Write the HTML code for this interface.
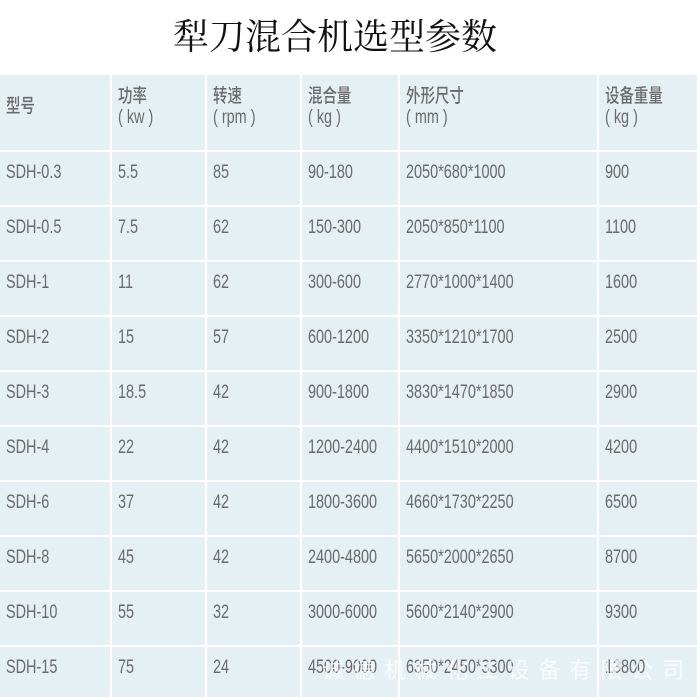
<!DOCTYPE html>
<html><head><meta charset="utf-8"><style>
body{margin:0;width:700px;height:700px;background:#fff;position:relative;overflow:hidden;font-family:"Liberation Sans","Noto Sans CJK SC",sans-serif;color:#6b6b6b}
.t{position:absolute;left:0;width:670px;top:10px;text-align:center;font:36px "Noto Serif CJK SC","Liberation Serif",serif;color:#111;line-height:50px}
.c{position:absolute;background:#e5f0f4;box-sizing:border-box;padding-left:6px;font-size:19px;white-space:nowrap;overflow:hidden}
.c>span{display:inline-block;transform:scaleX(.76);transform-origin:left}
.h{line-height:21px;padding-top:9px}
.d{padding-top:10px;line-height:22px}
.cj{font-family:"Noto Sans CJK SC",sans-serif;font-size:19px;font-weight:500}
</style></head><body>
<div class="t">犁刀混合机选型参数</div>
<div id="w"></div>
<script>
var cols=[[0,110],[112,205],[207,300],[302,398],[400,597],[599,697]];
var head=[["型号",""],["功率","( kw )"],["转速","( rpm )"],["混合量","( kg )"],["外形尺寸","( mm )"],["设备重量","( kg )"]];
var rows=[["SDH-0.3","5.5","85","90-180","2050*680*1000","900"],["SDH-0.5","7.5","62","150-300","2050*850*1100","1100"],["SDH-1","11","62","300-600","2770*1000*1400","1600"],["SDH-2","15","57","600-1200","3350*1210*1700","2500"],["SDH-3","18.5","42","900-1800","3830*1470*1850","2900"],["SDH-4","22","42","1200-2400","4400*1510*2000","4200"],["SDH-6","37","42","1800-3600","4660*1730*2250","6500"],["SDH-8","45","42","2400-4800","5650*2000*2650","8700"],["SDH-10","55","32","3000-6000","5600*2140*2900","9300"],["SDH-15","75","24","4500-9000","6350*2450*3300","13800"]];
var h="";
cols.forEach(function(c,i){var hd=head[i];
h+='<div class="c h" style="left:'+c[0]+'px;width:'+(c[1]-c[0])+'px;top:75px;height:75px;'+(i==0?'padding-top:19px':'')+'"><span><span class="cj">'+hd[0]+'</span>'+(hd[1]?'<br>'+hd[1]:'')+'</span></div>';});
rows.forEach(function(r,j){var y=152+55*j;cols.forEach(function(c,i){
h+='<div class="c d" style="left:'+c[0]+'px;width:'+(c[1]-c[0])+'px;top:'+y+'px;height:'+(j==9?50:53)+'px"><span>'+r[i]+'</span></div>';});});
document.getElementById('w').innerHTML=h;
</script>
<div style="position:absolute;left:322px;top:653px;font:22px 'Noto Sans CJK SC',sans-serif;color:rgba(255,255,255,0.75);letter-spacing:2px;white-space:nowrap">诚 德 机 械 化 工 设 备 有 限 公 司</div>
</body></html>
